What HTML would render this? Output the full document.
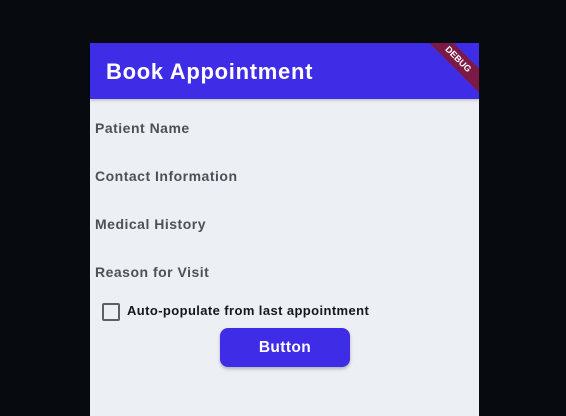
<!DOCTYPE html>
<html><head><style>
html,body{margin:0;padding:0;width:566px;height:416px;overflow:hidden;background:#070b0f;font-family:"Liberation Sans",sans-serif;}
.phone{position:absolute;left:90px;top:43px;width:389px;height:373px;background:#eceff4;overflow:hidden;}
.bar{position:absolute;left:0;top:0;width:389px;height:56px;background:#3f2ce6;box-shadow:0 1px 3px rgba(0,0,0,.25);}
.title{position:absolute;left:16px;top:16px;color:#fff;font-size:22px;font-weight:bold;letter-spacing:0.7px;}
.ribbon{position:absolute;right:-34px;top:8px;width:110px;height:17px;background:#7a1a45;transform:rotate(45deg);color:#fff;font-size:9px;font-weight:bold;text-align:center;line-height:17px;}
.lbl{position:absolute;left:5px;color:#4d5058;font-size:14px;font-weight:bold;letter-spacing:0.5px;}
.cb{position:absolute;left:12px;top:260px;width:14px;height:14px;border:2px solid #5f6066;border-radius:2px;}
.cbl{position:absolute;left:37px;top:260px;font-size:13px;font-weight:bold;color:#15171c;letter-spacing:0.4px;}
.btn{position:absolute;left:130px;top:285px;width:130px;height:39px;background:#3f2ce6;border-radius:8px;color:#fff;font-weight:bold;font-size:15.5px;text-align:center;line-height:39px;letter-spacing:0.4px;box-shadow:0 2px 3px rgba(0,0,0,.25);}
</style></head><body>
<div class="phone">
<div class="bar"><div class="title">Book Appointment</div><div class="ribbon">DEBUG</div></div>
<div class="lbl" style="top:77px">Patient Name</div>
<div class="lbl" style="top:125px">Contact Information</div>
<div class="lbl" style="top:173px">Medical History</div>
<div class="lbl" style="top:221px">Reason for Visit</div>
<div class="cb"></div><div class="cbl">Auto-populate from last appointment</div>
<div class="btn">Button</div>
</div>
</body></html>
